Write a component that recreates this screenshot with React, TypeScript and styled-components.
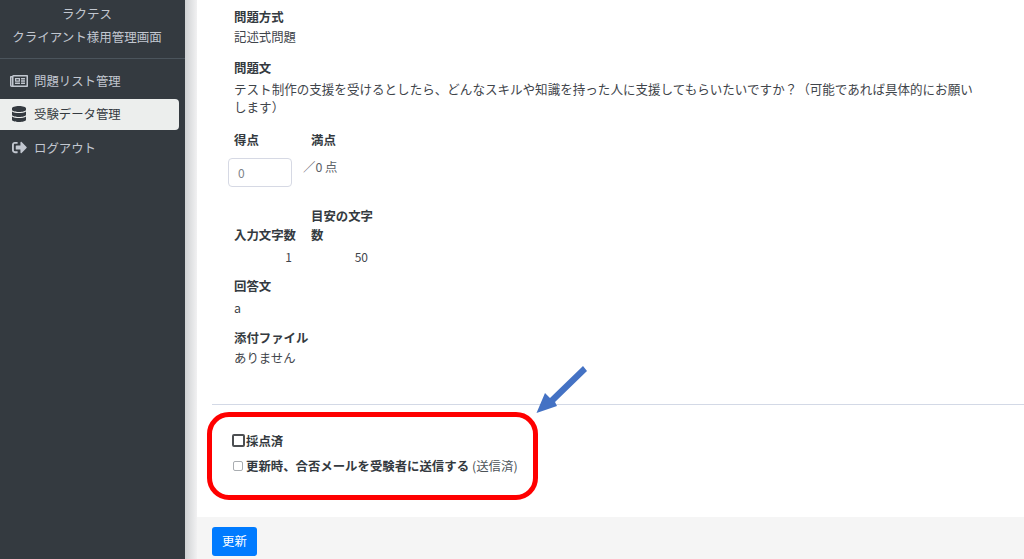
import styled, { createGlobalStyle } from 'styled-components';
import { FaDatabase, FaRegNewspaper, FaSignOutAlt } from 'react-icons/fa';

const GlobalStyle = createGlobalStyle`
  html, body {
    margin: 0;
    padding: 0;
    height: 100%;
    overflow: hidden;
    background: #ffffff;
    font-family: "Noto Sans CJK JP", "Noto Sans", sans-serif;
    color: #343a40;
  }
`;

const Page = styled.div`
  position: relative;
  display: flex;
  width: 1024px;
  height: 559px;
  overflow: hidden;
`;

const Sidebar = styled.aside`
  flex: 0 0 185px;
  background-color: #343a40;
  color: #c2c7d0;
`;

const Brand = styled.div`
  height: 59px;
  border-bottom: 1px solid #4b545c;
  text-align: center;
  font-size: 12.5px;
  line-height: 23px;
  padding-top: 2px;
  padding-right: 11px;
  box-sizing: border-box;
`;

const Nav = styled.nav`
  display: flex;
  flex-direction: column;
  gap: 2px;
  padding: 6px 6px 0 0;
`;

const NavItem = styled.a<{ $active?: boolean }>`
  display: flex;
  align-items: center;
  height: 31.5px;
  padding-left: 10px;
  gap: 6px;
  font-size: 12.4px;
  border-radius: 0 4px 4px 0;
  background-color: ${(p) => (p.$active ? '#eceeed' : 'transparent')};
  color: ${(p) => (p.$active ? '#343a40' : '#c2c7d0')};
`;

const NavIcon = styled.span`
  display: flex;
  justify-content: center;
  width: 18px;
  font-size: 16px;
`;

const Gutter = styled.div`
  flex: 0 0 12px;
  background: linear-gradient(to right, #cfd1d3, #f1f1f2);
`;

const Main = styled.main`
  flex: 1;
  display: flex;
  flex-direction: column;
  min-width: 0;
`;

const Content = styled.div`
  flex: 1;
  padding: 0 15px;
`;

const Details = styled.div`
  padding: 7px 47px 0 22px;
  height: 405px;
  box-sizing: border-box;
  border-bottom: 1px solid #d3d9e6;
  margin-right: -15px;
`;

const Block = styled.section<{ $gap?: number }>`
  margin-bottom: ${(p) => p.$gap ?? 11}px;
`;

const Label = styled.div`
  font-size: 12.4px;
  font-weight: 700;
  line-height: 20px;
`;

const Value = styled.div`
  font-size: 12.4px;
  line-height: 20px;
  color: #3f454b;
`;

const AnswerText = styled(Value)`
  margin-top: 2px;
`;

const Body = styled.div`
  font-size: 12.55px;
  line-height: 18px;
  margin-top: 2px;
  color: #3f454b;
`;

const ScoreRow = styled.div`
  display: grid;
  grid-template-columns: 77px auto;
  margin-top: 14px;
`;

const ScoreInput = styled.input`
  display: block;
  width: 64px;
  height: 29px;
  box-sizing: border-box;
  margin: 8px 0 0 -6px;
  padding: 0 9px;
  border: 1px solid #d6d9e4;
  border-radius: 4px;
  font-size: 12px;
  font-family: inherit;
  color: #7d8389;
  &::placeholder { color: #7d8389; }
`;

const FullScore = styled.div`
  font-size: 12.4px;
  line-height: 20px;
  margin-top: 7px;
  margin-left: -8px;
  color: #5c6268;
`;

const CountTable = styled.table`
  border-collapse: collapse;
  margin-top: 20px;
  margin-bottom: 10px;
  th {
    padding: 0;
    width: 62px;
    font-size: 12.4px;
    font-weight: 700;
    line-height: 19px;
    text-align: left;
    vertical-align: bottom;
  }
  th:first-child { width: 77px; }
  td {
    padding: 2px 5px 0 0;
    font-size: 12px;
    line-height: 19px;
    text-align: right;
    color: #3f454b;
  }
  td:first-child { padding-right: 19px; }
`;

const Checks = styled.div`
  padding: 27px 0 0 21px;
  display: flex;
  flex-direction: column;
  gap: 8px;
`;

const CheckRow = styled.label`
  display: flex;
  align-items: center;
  height: 17px;
  gap: 1px;
  font-size: 12.4px;
  font-weight: 700;
`;

const Box = styled.span<{ $focused?: boolean }>`
  display: block;
  width: ${(p) => (p.$focused ? 13 : 10)}px;
  height: ${(p) => (p.$focused ? 13 : 10)}px;
  margin-left: ${(p) => (p.$focused ? -1 : 0)}px;
  margin-right: ${(p) => (p.$focused ? 0 : 2)}px;
  box-sizing: border-box;
  border: ${(p) => (p.$focused ? '2px solid #4c4f52' : '1px solid #a9adb1')};
  border-radius: 2px;
  background: #ffffff;
`;

const Note = styled.span`
  font-weight: 400;
  color: #4c5258;
  margin-left: 2px;
`;

const Footer = styled.div`
  flex: 0 0 42px;
  background-color: #f5f5f5;
  padding: 10px 15px 0;
  box-sizing: border-box;
`;

const SubmitButton = styled.button`
  display: block;
  width: 45px;
  height: 29px;
  padding: 0 0 2px;
  border: none;
  border-radius: 3px;
  background-color: #007bff;
  color: #ffffff;
  font-size: 12.4px;
  font-family: inherit;
`;

const Highlight = styled.div`
  position: absolute;
  left: 207px;
  top: 412px;
  width: 331px;
  height: 88px;
  box-sizing: border-box;
  border: 5px solid #ff0000;
  border-radius: 22px;
  pointer-events: none;
`;

const Arrow = styled.svg`
  position: absolute;
  left: 530px;
  top: 360px;
  width: 62px;
  height: 58px;
  pointer-events: none;
`;

export default function App() {
  return (
    <Page>
      <GlobalStyle />
      <Sidebar>
        <Brand>
          <div>ラクテス</div>
          <div>クライアント様用管理画面</div>
        </Brand>
        <Nav>
          <NavItem>
            <NavIcon><FaRegNewspaper size={18} /></NavIcon>
            問題リスト管理
          </NavItem>
          <NavItem $active>
            <NavIcon><FaDatabase /></NavIcon>
            受験データ管理
          </NavItem>
          <NavItem>
            <NavIcon><FaSignOutAlt size={15} /></NavIcon>
            ログアウト
          </NavItem>
        </Nav>
      </Sidebar>
      <Gutter />
      <Main>
        <Content>
          <Details>
            <Block>
              <Label>問題方式</Label>
              <Value>記述式問題</Value>
            </Block>
            <Block>
              <Label>問題文</Label>
              <Body>
                テスト制作の支援を受けるとしたら、どんなスキルや知識を持った人に支援してもらいたいですか？（可能であれば具体的にお願いします）
              </Body>
            </Block>
            <ScoreRow>
              <div>
                <Label>得点</Label>
                <ScoreInput placeholder="0" readOnly />
              </div>
              <div>
                <Label>満点</Label>
                <FullScore>／0 点</FullScore>
              </div>
            </ScoreRow>
            <CountTable>
              <thead>
                <tr>
                  <th>入力文字数</th>
                  <th>目安の文字数</th>
                </tr>
              </thead>
              <tbody>
                <tr>
                  <td>1</td>
                  <td>50</td>
                </tr>
              </tbody>
            </CountTable>
            <Block $gap={10}>
              <Label>回答文</Label>
              <AnswerText>a</AnswerText>
            </Block>
            <Block $gap={0}>
              <Label>添付ファイル</Label>
              <Value>ありません</Value>
            </Block>
          </Details>
          <Checks>
            <CheckRow>
              <Box $focused />
              採点済
            </CheckRow>
            <CheckRow>
              <Box />
              更新時、合否メールを受験者に送信する
              <Note>(送信済)</Note>
            </CheckRow>
          </Checks>
        </Content>
        <Footer>
          <SubmitButton>更新</SubmitButton>
        </Footer>
      </Main>
      <Highlight />
      <Arrow viewBox="0 0 62 58">
        <path d="M6.5 53 L15 33 L20 38 L53 6 L57 11 L25 42 L27 46 Z" fill="#4472c4" />
      </Arrow>
    </Page>
  );
}
